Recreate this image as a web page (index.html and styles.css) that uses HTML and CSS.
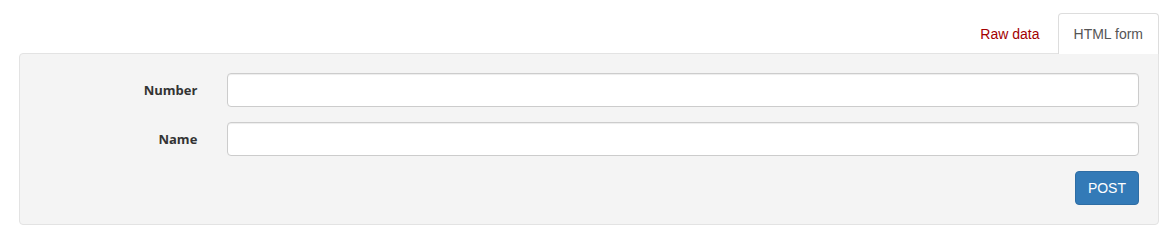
FILE: index.html
```html
<!DOCTYPE html>
<html lang="en">
<head>
  <meta charset="UTF-8">
  <title>Form</title>
  <link rel="stylesheet" href="styles.css">
</head>
<body>
  <div class="content">
    <ul class="tabs">
      <li><a href="#">Raw data</a></li>
      <li class="active"><a href="#">HTML form</a></li>
    </ul>
    <div class="well">
      <form class="form-horizontal">
        <div class="form-group">
          <label class="control-label" for="number">Number</label>
          <div class="control"><input type="text" id="number"></div>
        </div>
        <div class="form-group">
          <label class="control-label" for="name">Name</label>
          <div class="control"><input type="text" id="name"></div>
        </div>
        <div class="actions">
          <button type="button" class="btn-primary">POST</button>
        </div>
      </form>
    </div>
  </div>
</body>
</html>
```

FILE: styles.css
```css
* {
  box-sizing: border-box;
}
body {
  margin: 0;
  font-family: "Liberation Sans", Arial, sans-serif;
  font-size: 14px;
  line-height: 20px;
  color: #333;
  background: #fff;
}
.content {
  width: 1140px;
  margin-left: 19px;
  padding-top: 13px;
}
.tabs {
  list-style: none;
  margin: 0;
  padding: 0;
  display: flex;
  justify-content: flex-end;
}
.tabs li {
  margin-bottom: -1px;
  margin-left: 2px;
  position: relative;
  z-index: 1;
}
.tabs a {
  display: block;
  padding: 10px 15px;
  border: 1px solid transparent;
  border-bottom: none;
  border-radius: 4px 4px 0 0;
  color: #a30000;
  text-decoration: none;
  height: 41px;
}
.tabs .active a {
  color: #555;
  background: #fff;
  border-color: #ddd;
}
.well {
  background: #f4f4f4;
  border: 1px solid #e3e3e3;
  border-radius: 4px 0 4px 4px;
  padding: 19px;
  min-height: 172px;
}
.form-group {
  display: flex;
  margin: 0 -15px 15px;
}
.control-label {
  width: 16.6667%;
  padding: 7px 15px 0;
  text-align: right;
  font-family: "Open Sans", "Liberation Sans", sans-serif;
  font-weight: bold;
  font-size: 13px;
  color: #333;
}
.control {
  width: 83.3333%;
  padding: 0 15px;
}
.control input {
  display: block;
  width: 100%;
  height: 34px;
  padding: 6px 12px;
  font: inherit;
  border: 1px solid #ccc;
  border-radius: 4px;
  background: #fff;
  box-shadow: inset 0 1px 1px rgba(0,0,0,0.075);
}
.actions {
  display: flex;
  justify-content: flex-end;
}
.btn-primary {
  font-family: "Liberation Sans", Arial, sans-serif;
  font-size: 14px;
  line-height: 20px;
  padding: 6px 12px;
  color: #fff;
  background: #337ab7;
  border: 1px solid #2e6da4;
  border-radius: 4px;
}
```
